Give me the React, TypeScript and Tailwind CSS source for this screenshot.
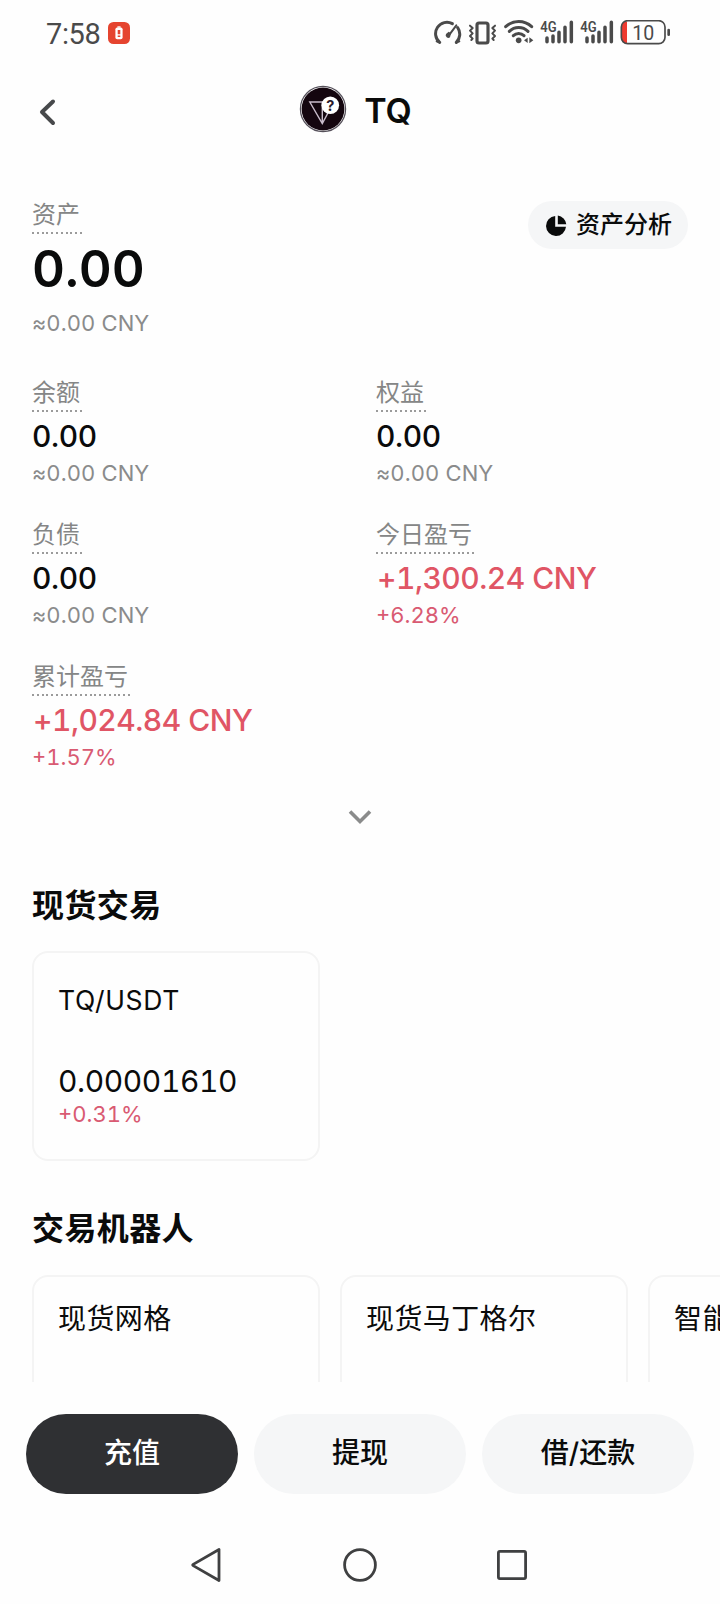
import { ReactNode } from 'react'
import clsx from 'clsx'

const stats = [
  { label: '余额', value: '0.00', sub: '≈0.00 CNY' },
  { label: '权益', value: '0.00', sub: '≈0.00 CNY' },
  { label: '负债', value: '0.00', sub: '≈0.00 CNY' },
  { label: '今日盈亏', value: '+1,300.24 CNY', sub: '+6.28%', up: true },
  { label: '累计盈亏', value: '+1,024.84 CNY', sub: '+1.57%', up: true },
]

const bots = ['现货网格', '现货马丁格尔', '智能套利']

const SignalIcon = () => (
  <svg width="34" height="25" viewBox="360 60 102 75">
    <text x="361" y="95" fontSize="43" fontWeight="600" fontFamily="Roboto, sans-serif" textLength="49" lengthAdjust="spacingAndGlyphs" fill="#4a4a4a">4G</text>
    <path d="M381 114v11M399 108v17M417 97v28M435 82v43M454 67v58" stroke="#4a4a4a" strokeWidth="10.5" strokeLinecap="round" />
  </svg>
)

const StatusBar = () => (
  <div className="flex h-16 items-center justify-between pl-[46px] pr-12">
    <div className="flex items-center gap-1.5">
      <span className="w-[56px] font-[Roboto,sans-serif] text-[29px] leading-none tracking-[-0.4px] text-[#4a4a4a] pt-1">7:58</span>
      <svg width="22" height="22" viewBox="0 0 22 22" className="mt-0.5">
        <rect width="22" height="22" rx="5.5" fill="#e5442f" />
        <path d="M9.4 4.3h3.2v1.4h-3.2z" fill="#fff" />
        <rect x="7.4" y="5.4" width="7.2" height="11.8" rx="1.8" fill="#fff" />
        <path d="M11 8v4.2M11 13.6v1.5" stroke="#e5442f" strokeWidth="2.6" />
      </svg>
    </div>
    <div className="flex items-center gap-1.5 pt-px">
      <svg width="28" height="25" viewBox="42 60 84 75" fill="none" stroke="#4a4a4a" strokeWidth="9" strokeLinecap="round">
        <path d="M59 127a34 34 0 0 1 38-56M113 83a34 34 0 0 1-4 44" />
        <path d="M50 124l9 4M118 124l-9 4" strokeWidth="6" />
        <path d="M86 107l23-31" strokeWidth="6" />
        <path d="M78 102l8-7 7 5-3 12a8 8 0 0 1-12-10z" fill="#4a4a4a" stroke="none" />
      </svg>
      <svg width="29" height="25" viewBox="144 60 87 75" fill="none" stroke="#4a4a4a">
        <rect x="171" y="69" width="33" height="60" rx="6" strokeWidth="9.5" />
        <path d="M150 77l8 7-8 8 8 8-8 8 8 8-4 4M225 77l-8 7 8 8-8 8 8 8-8 8 4 4" strokeWidth="6" strokeLinejoin="round" strokeLinecap="round" />
      </svg>
      <svg width="31" height="25" viewBox="249 60 93 75" fill="none" stroke="#4a4a4a" strokeWidth="9" strokeLinecap="round">
        <path d="M257 80a57 57 0 0 1 78 0M268 94a40 40 0 0 1 56 0M280 107a23 23 0 0 1 32 0" />
        <circle cx="296" cy="121" r="8.5" fill="#4a4a4a" stroke="none" />
        <path d="M312 121l11-8v16zM328 112l12 9-12 9z" fill="#4a4a4a" stroke="none" />
      </svg>
      <SignalIcon />
      <SignalIcon />
      <svg width="52" height="25" viewBox="600 60 156 75">
        <path d="M621 65v66h-1q-15 0-15-16V80q0-15 15-15z" fill="#ee3a30" />
        <rect x="604" y="62" width="131" height="69" rx="19" fill="none" stroke="#4a4a4a" strokeWidth="5" />
        <rect x="742" y="86" width="8" height="22" rx="4" fill="#4a4a4a" />
        <text x="670" y="119" textAnchor="middle" fontSize="62" fontFamily="Roboto, sans-serif" fill="#4a4a4a" textLength="66" lengthAdjust="spacingAndGlyphs">10</text>
      </svg>
    </div>
  </div>
)

const CoinLogo = () => (
  <svg width="48" height="48" viewBox="0 0 48 48">
    <circle cx="24" cy="24" r="22.6" fill="#fff" stroke="#55505a" strokeWidth="1.2" />
    <circle cx="24" cy="24" r="21.4" fill="#14060f" />
    <path d="M10.8 17h24L23.3 38.5zM23.3 17v21" fill="none" stroke="#c9bccb" strokeWidth="1.4" />
    <circle cx="31.3" cy="20.3" r="8.8" fill="#fff" />
    <text x="31.3" y="25.6" textAnchor="middle" fontSize="14.5" fontWeight="700" fontFamily="Inter, sans-serif" fill="#2a1a2c">?</text>
  </svg>
)

const DottedLabel = ({ children }: { children: ReactNode }) => (
  <div className="w-fit pr-[3px] text-2xl leading-[34px] text-[#858686]">
    {children}
    <div className="-mr-[3px] h-[2px] bg-[repeating-linear-gradient(90deg,#9b9b9b_0_2px,transparent_2px_4.8px)]" />
  </div>
)

const Card = ({ className, children }: { className?: string; children: ReactNode }) => (
  <div className={clsx('w-72 shrink-0 rounded-2xl border-2 border-[#f4f4f4] px-6', className)}>{children}</div>
)

const App = () => {
  return (
    <div className="flex h-[1604px] w-[720px] flex-col overflow-hidden bg-[#fefefe] font-[Inter,'Noto_Sans_CJK_SC',sans-serif] text-[#0a0b0b] tabular-nums">
      <StatusBar />

      <header className="flex h-24 items-center pb-1.5 pl-8 pr-[41px]">
        <div className="flex-1">
          <svg width="32" height="32" viewBox="0 0 32 32" fill="none" className="mt-1.5">
            <path d="M21 5.5L10 16l11 11" stroke="#47494b" strokeWidth="4" strokeLinecap="round" strokeLinejoin="round" />
          </svg>
        </div>
        <div className="flex items-center gap-[17px]">
          <CoinLogo />
          <h1 className="pt-1 text-[34px] font-semibold leading-none">TQ</h1>
        </div>
        <div className="flex-1" />
      </header>

      <main className="flex min-h-0 flex-1 flex-col overflow-hidden px-8">
        <div className="flex h-[216px] shrink-0 justify-between pt-[38px]">
          <div>
            <DottedLabel>资产</DottedLabel>
            <div className="mt-[5px] text-[51px] font-semibold leading-[60px]">0.00</div>
            <div className="mt-[9px] text-[22px] leading-[30px] tracking-[0.1px] text-[#8a8b8b]">≈0.00 CNY</div>
          </div>
          <button className="mt-[3px] flex h-12 w-40 items-center gap-[9px] rounded-full bg-[#f5f6f7] pl-[18px] text-2xl font-medium">
            <svg width="21" height="21" viewBox="0 0 21 21" fill="#0a0b0b">
              <path d="M9.2 1v10.8H20A10 10 0 1 1 9.2 1z" />
              <path d="M11.8.6A9.6 9.6 0 0 1 20.3 9.2h-8.5z" />
            </svg>
            资产分析
          </button>
        </div>

        <div className="grid shrink-0 grid-cols-[344px_1fr]">
          {stats.map((s) => (
            <div key={s.label} className="h-[142px]">
              <DottedLabel>{s.label}</DottedLabel>
              <div className={clsx('mt-[6px] text-[30px] font-medium leading-9', s.up ? 'pl-px tracking-[-0.5px] text-[#e05565]' : 'tracking-[-0.4px]')}>{s.value}</div>
              <div className={clsx('mt-[4px] text-[22px] leading-[30px]', s.up ? 'text-[#d95a72]' : 'tracking-[0.1px] text-[#8a8b8b]')}>{s.sub}</div>
            </div>
          ))}
        </div>

        <svg width="24" height="16" viewBox="0 0 24 16" fill="none" className="mt-[7px] shrink-0 self-center">
          <path d="M2 2.5l10 10 10-10" stroke="#8a8b8b" strokeWidth="3.6" />
        </svg>

        <h2 className="mt-[59px] text-[32px] font-bold leading-[44px] tracking-[0.4px]">现货交易</h2>
        <Card className="mt-[23px] h-[210px] shrink-0 pt-[30px]">
          <div className="text-[26.5px] leading-[34px] tracking-[0.7px]">TQ/USDT</div>
          <div className="mt-[46px] text-[30px] leading-9 tracking-[-0.4px]">0.00001610</div>
          <div className="text-[22px] leading-[30px] text-[#d95a72]">+0.31%</div>
        </Card>

        <h2 className="mt-[46px] text-[32px] font-bold leading-[44px] tracking-[0.4px]">交易机器人</h2>
        <div className="mt-6 flex gap-5">
          {bots.map((name) => (
            <Card key={name} className="h-[210px] whitespace-nowrap pt-[22px] text-[28px] leading-10 tracking-[0.4px]">
              {name}
            </Card>
          ))}
        </div>
      </main>

      <footer className="shrink-0">
        <div className="flex gap-4 px-[26px] pt-8 text-[28px] font-medium">
          <button className="h-20 flex-1 rounded-full bg-[#2f3033] pb-0.5 text-white">充值</button>
          <button className="h-20 flex-1 rounded-full bg-[#f5f6f7] pb-0.5">提现</button>
          <button className="h-20 flex-1 rounded-full bg-[#f5f6f7] pb-0.5">借/还款</button>
        </div>
        <nav className="flex h-[110px] items-center justify-center gap-[116px] pt-8">
          <svg width="36" height="36" viewBox="0 0 36 36" fill="none" stroke="#3f4041" strokeWidth="2.8" strokeLinejoin="round">
            <path d="M29 2.5v31L3.2 18.6q-1-.6 0-1.2z" />
          </svg>
          <svg width="36" height="36" viewBox="0 0 36 36" fill="none" stroke="#3f4041" strokeWidth="2.8">
            <circle cx="18" cy="18" r="15.4" />
          </svg>
          <svg width="36" height="36" viewBox="0 0 36 36" fill="none" stroke="#3f4041" strokeWidth="2.8">
            <rect x="4.4" y="4.4" width="27.2" height="27.2" rx="1.5" />
          </svg>
        </nav>
      </footer>
    </div>
  )
}

export default App
